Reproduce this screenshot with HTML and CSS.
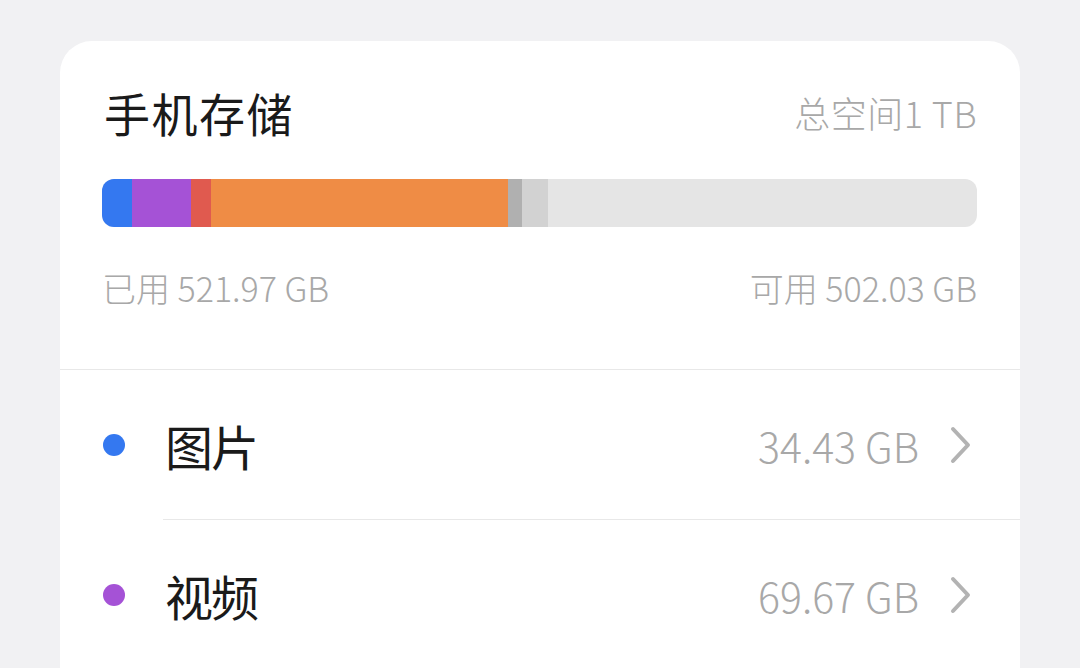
FILE: index.html
```html
<!DOCTYPE html>
<html lang="zh-CN">
  <head>
    <meta charset="UTF-8" />
    <meta name="viewport" content="width=device-width, initial-scale=1.0" />
    <title>手机存储</title>
    <link rel="stylesheet" href="styles.css">
  </head>
  <body>
    <div class="card">
      <div class="summary">
        <div class="summary-head">
          <div class="summary-title">手机存储</div>
          <div class="summary-total">总空间1 TB</div>
        </div>
        <!-- usage bar, widths in px of an 875px track -->
        <div class="usage-bar">
          <span class="seg seg-photo" style="width: 30px"></span>
          <span class="seg seg-video" style="width: 59px"></span>
          <span class="seg seg-audio" style="width: 20px"></span>
          <span class="seg seg-apps" style="width: 297px"></span>
          <span class="seg seg-system" style="width: 14px"></span>
          <span class="seg seg-other" style="width: 26px"></span>
        </div>
        <div class="usage-labels">
          <span>已用 521.97 GB</span>
          <span>可用 502.03 GB</span>
        </div>
      </div>

      <div class="category">
        <span class="dot dot-photo"></span>
        <span class="category-name">图片</span>
        <span class="category-size">34.43 GB</span>
        <svg class="chevron" width="26" height="38" viewBox="0 0 26 38">
          <path d="M6 3 L21 19 L6 35" fill="none" stroke="#b3b3b3" stroke-width="4" stroke-linecap="round" stroke-linejoin="round" />
        </svg>
      </div>
      <div class="category">
        <span class="dot dot-video"></span>
        <span class="category-name">视频</span>
        <span class="category-size">69.67 GB</span>
        <svg class="chevron" width="26" height="38" viewBox="0 0 26 38">
          <path d="M6 3 L21 19 L6 35" fill="none" stroke="#b3b3b3" stroke-width="4" stroke-linecap="round" stroke-linejoin="round" />
        </svg>
      </div>
    </div>
  </body>
</html>
```

FILE: styles.css
```css
body {
  margin: 0;
  background-color: #f1f1f3;
  font-family: "Noto Sans CJK SC", "Noto Sans", sans-serif;
  overflow: hidden;
}
.card {
  margin: 41px 60px 0 60px;
  background-color: #fff;
  border-radius: 32px 32px 0 0;
  height: 700px;
}
.summary {
  padding: 40px 43px 59px 44px;
  border-bottom: 1px solid #e8e8e8;
}
.summary-head {
  display: flex;
  align-items: center;
  justify-content: space-between;
  height: 62px;
}
.summary-title {
  font-size: 46px;
  font-weight: 400;
  color: #1a1a1a;
  letter-spacing: 1.5px;
}
.summary-total {
  font-size: 36px;
  font-weight: 300;
  color: #a8a8a8;
  letter-spacing: 0.5px;
}
.usage-bar {
  display: flex;
  height: 48px;
  margin-top: 36px;
  margin-left: -2px;
  border-radius: 12px;
  overflow: hidden;
  background-color: #e5e5e5;
}
.seg {
  height: 100%;
}
.seg-photo { background-color: #3478f0; }
.seg-video { background-color: #a552d6; }
.seg-audio { background-color: #e05a4f; }
.seg-apps { background-color: #ef8c45; }
.seg-system { background-color: #b0b0b0; }
.seg-other { background-color: #d2d2d2; }
.usage-labels {
  display: flex;
  justify-content: space-between;
  margin-top: 39px;
  font-size: 34px;
  font-weight: 300;
  line-height: 44px;
  color: #a8a8a8;
}
.usage-labels span:first-child {
  margin-left: -2px;
}
.category {
  display: flex;
  align-items: center;
  height: 149px;
  padding: 0 47px 0 43px;
}
.category + .category {
  border-top: 1px solid #e8e8e8;
  margin-left: 103px;
  padding-left: 0;
}
.category + .category .dot {
  margin-left: -60px;
}
.dot {
  width: 22px;
  height: 22px;
  border-radius: 50%;
  margin-right: 40px;
  flex-shrink: 0;
}
.dot-photo { background-color: #3478f0; }
.dot-video { background-color: #a552d6; }
.category-name {
  flex: 1;
  font-size: 48px;
  font-weight: 400;
  color: #1a1a1a;
  letter-spacing: -2px;
}
.category-size {
  font-size: 41px;
  font-weight: 300;
  color: #a8a8a8;
  margin-right: 28px;
}
```
